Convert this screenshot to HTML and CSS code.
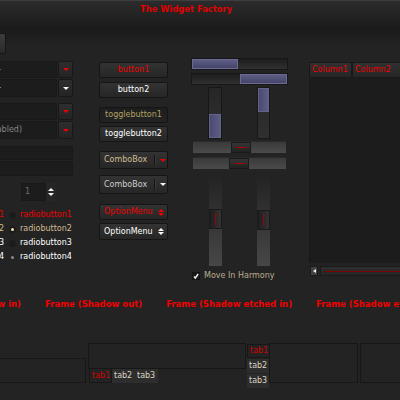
FILE: index.html
```html
<!DOCTYPE html>
<html>
<head>
<meta charset="utf-8">
<title>The Widget Factory</title>
<link rel="stylesheet" href="styles.css">
</head>
<body>
<div class="window">
  <div class="titlebar"><span class="title">The Widget Factory</span></div>
  <div class="toolbar"><div class="tbtn"></div></div>

  <div class="main">
    <div class="col-left">
      <div class="combo-entry">
        <div class="field"><span class="etext tan">comboentry -</span></div>
        <div class="abtn"><span class="tri-down red-tri"></span></div>
      </div>
      <div class="combo-entry ce2">
        <div class="field"><span class="etext white">comboentry -</span></div>
        <div class="abtn"><span class="tri-down white-tri"></span></div>
      </div>
      <div class="combo-entry ce3">
        <div class="field"></div>
        <div class="abtn"><span class="tri-down red-tri"></span></div>
      </div>
      <div class="combo-entry ce2">
        <div class="field"><span class="etext gray dis">entry (disabled)</span></div>
        <div class="abtn"><span class="tri-down red-tri"></span></div>
      </div>
      <div class="entry e5"></div>
      <div class="entry e6"></div>
      <div class="spin">
        <div class="spin-field">1</div>
        <div class="spin-arrows"><span class="tri-up white-tri small"></span><span class="tri-down white-tri small"></span></div>
      </div>
      <div class="radios">
        <div class="rrow"><span class="ck red">checkbutton1</span><span class="radio"></span><span class="rlabel red">radiobutton1</span></div>
        <div class="rrow"><span class="ck tan">checkbutton2</span><span class="radio on"><span class="dot"></span></span><span class="rlabel tan">radiobutton2</span></div>
        <div class="rrow"><span class="ck white">checkbutton3</span><span class="radio"></span><span class="rlabel white">radiobutton3</span></div>
        <div class="rrow"><span class="ck white">checkbutton4</span><span class="radio incon"><span class="dot"></span></span><span class="rlabel white">radiobutton4</span></div>
      </div>
    </div>

    <div class="col-mid">
      <div class="btn b1 red">button1</div>
      <div class="btn b2 white">button2</div>
      <div class="btn b3 toggled olive">togglebutton1</div>
      <div class="btn b4 white">togglebutton2</div>
      <div class="btn combo c1"><span class="tan">ComboBox</span><span class="sep"></span><span class="tri-down red-tri"></span></div>
      <div class="btn combo c2"><span class="lgray">ComboBox</span><span class="sep"></span><span class="tri-down white-tri"></span></div>
      <div class="btn opt o1"><span class="red">OptionMenu</span><span class="dbl"><span class="tri-up red-tri small"></span><span class="tri-down red-tri small"></span></span></div>
      <div class="btn opt o2"><span class="white">OptionMenu</span><span class="dbl"><span class="tri-up white-tri small"></span><span class="tri-down white-tri small"></span></span></div>
    </div>

    <div class="col-scales">
      <div class="pbar"><div class="pfill" style="width:48%"></div></div>
      <div class="pbar pb2"><div class="pfill" style="width:50%"></div></div>
      <div class="vbars">
        <div class="vbar va"><div class="vfill" style="height:48%"></div></div>
        <div class="vbar vb end"><div class="vfill" style="height:48%"></div></div>
      </div>
      <div class="hscale"><div class="hthumb" style="margin-left:38px"><span class="hline"></span></div></div>
      <div class="hscale hs2"><div class="hthumb" style="margin-left:36px"><span class="hline"></span></div></div>
      <div class="vscales">
        <div class="vscale sa"><div class="vthumb" style="margin-top:36px"><span class="vline"></span></div></div>
        <div class="vscale sb"><div class="vthumb" style="margin-top:37px"><span class="vline"></span></div></div>
      </div>
      <div class="check">
        <svg class="cbox" width="8" height="8" viewBox="0 0 8 8"><rect x="0.5" y="0.5" width="7" height="7" fill="#1a1a1a" stroke="#141414"/><path d="M2 4.5 L3.3 6 L6.2 2" stroke="#f0f0f0" stroke-width="1.4" fill="none"/></svg>
        <span class="tan2">Move In Harmony</span>
      </div>
    </div>

    <div class="col-tree">
      <div class="theader">
        <div class="th th1 red">Column1</div>
        <div class="th th2 red">Column2</div>
      </div>
      <div class="tbody"></div>
      <div class="hscroll">
        <div class="sbtn"><span class="tri-left"></span></div>
        <div class="strough"><span class="sline"></span></div>
      </div>
    </div>
  </div>

  <div class="frames">
    <div class="flabel f1">Frame (Shadow in)</div>
    <div class="flabel">Frame (Shadow out)</div>
    <div class="flabel">Frame (Shadow etched in)</div>
    <div class="flabel">Frame (Shadow etched out)</div>
  </div>

  <div class="notebooks">
    <div class="nb1"></div>
    <div class="nb2">
      <div class="pane"></div>
      <div class="tabs-bottom">
        <div class="tab active red2">tab1</div>
        <div class="tab ltan">tab2</div>
        <div class="tab ltan">tab3</div>
      </div>
    </div>
    <div class="nb3">
      <div class="tabs-left">
        <div class="tab active red2">tab1</div>
        <div class="tab ltan">tab2</div>
        <div class="tab ltan">tab3</div>
      </div>
      <div class="pane"></div>
    </div>
    <div class="nb4"></div>
  </div>
</div>
</body>
</html>
```

FILE: styles.css
```css
html, body {
  margin: 0;
  padding: 0;
}
body {
  background: #232323;
  font-family: "DejaVu Sans", "Noto Sans", sans-serif;
  font-size: 8px;
  line-height: 10px;
}
.window {
  width: 400px;
  height: 400px;
  overflow: hidden;
  background: #232323;
}

/* colours */
.red { color: #ee0000; }
.red2 { color: #d00000; }
.tan { color: #d0bc92; }
.tan2 { color: #bcad8e; }
.ltan { color: #dcd4c4; }
.white { color: #ffffff; }
.gray { color: #848484; }
.lgray { color: #cccccc; }
.olive { color: #b0a262; }

/* title / toolbar */
.titlebar {
  height: 30px;
  box-sizing: border-box;
  border-top: 1px solid #3e3e3e;
  background: linear-gradient(#2b2b2b, #1a1a1a);
  padding: 3px 0 0 140px;
}
.title {
  color: #e00000;
  font-weight: bold;
  font-size: 8.4px;
}
.toolbar {
  height: 26px;
  background: linear-gradient(#1b1b1b, #232323 60%);
  display: flex;
  align-items: center;
}
.tbtn {
  width: 24px;
  height: 19px;
  margin-left: -20px;
  border: 1px solid #151515;
  border-radius: 2px;
  background: linear-gradient(#3c3c3c, #2a2a2a);
}

/* triangles */
.tri-down, .tri-up {
  display: inline-block;
  width: 0;
  height: 0;
  border-left: 3.5px solid transparent;
  border-right: 3.5px solid transparent;
}
.tri-down { border-top: 3.5px solid currentColor; }
.tri-up { border-bottom: 3.5px solid currentColor; }
.tri-down.small, .tri-up.small {
  border-left-width: 3px;
  border-right-width: 3px;
}
.tri-down.small { border-top-width: 3px; }
.tri-up.small { border-bottom-width: 3px; }
.red-tri { color: #f00000; }
.white-tri { color: #f6f6f6; }

/* main */
.main {
  display: flex;
  align-items: flex-start;
  height: 224px;
}

/* left column */
.col-left {
  margin-left: -80px;
  width: 153px;
  flex: none;
  display: flex;
  flex-direction: column;
}
.combo-entry {
  display: flex;
  gap: 1px;
  height: 17px;
  margin-top: 5px;
}
.combo-entry.ce2 { margin-top: 1px; height: 18px; }
.combo-entry.ce3 { margin-top: 6px; }
.field, .entry {
  box-sizing: border-box;
  background: #1c1c1c;
  border: 1px solid #191919;
  border-radius: 1px;
}
.field {
  flex: 1;
  display: flex;
  align-items: center;
  justify-content: flex-end;
  padding-right: 55px;
}
.etext { white-space: nowrap; }
.etext.dis { margin-right: -21px; }
.abtn {
  width: 15px;
  box-sizing: border-box;
  border: 1px solid #181818;
  border-radius: 2px;
  background: linear-gradient(#2e2e2e, #242424);
  display: flex;
  align-items: center;
  justify-content: center;
}
.entry { height: 14px; }
.entry.e5 { margin-top: 7px; }
.entry.e6 { margin-top: 1px; height: 15px; }
.spin {
  margin-top: 7px;
  margin-left: 101px;
  width: 35px;
  height: 18px;
  display: flex;
}
.spin-field {
  width: 25px;
  box-sizing: border-box;
  background: #1c1c1c;
  border: 1px solid #191919;
  color: #6e6e6e;
  padding-left: 3px;
  display: flex;
  align-items: center;
}
.spin-arrows {
  flex: 1;
  background: #262626;
  display: flex;
  flex-direction: column;
  align-items: center;
  justify-content: center;
  gap: 2px;
}
.radios {
  margin-top: 7px;
  display: flex;
  flex-direction: column;
}
.rrow {
  height: 14px;
  display: flex;
  align-items: center;
}
.ck {
  width: 84px;
  text-align: right;
  white-space: nowrap;
  overflow: hidden;
  flex: none;
}
.radio {
  width: 7px;
  height: 7px;
  margin-left: 5px;
  border-radius: 50%;
  background: #1b1b1b;
  display: flex;
  align-items: center;
  justify-content: center;
  flex: none;
}
.radio .dot {
  width: 3px;
  height: 3px;
  border-radius: 50%;
  background: #efe0b0;
}
.radio.incon { background: transparent; }
.radio.incon .dot { background: #8a8a8a; }
.rlabel { margin-left: 4px; white-space: nowrap; }

/* middle column */
.col-mid {
  margin-left: 26px;
  width: 69px;
  flex: none;
  display: flex;
  flex-direction: column;
}
.btn {
  height: 16px;
  box-sizing: border-box;
  border: 1px solid #151515;
  border-radius: 2px;
  background: linear-gradient(#333333, #262626);
  display: flex;
  align-items: center;
  justify-content: center;
  white-space: nowrap;
}
.btn.b1 { margin-top: 6px; }
.btn.b2 { margin-top: 4px; }
.btn.b3 { margin-top: 9px; }
.btn.b4 { margin-top: 3px; }
.btn.toggled { background: linear-gradient(#1e1e1e, #232323); }
.btn.combo {
  justify-content: flex-start;
  padding-left: 4px;
}
.btn.c1 { margin-top: 9px; height: 18px; }
.btn.c2 { margin-top: 6px; height: 19px; }
.sep {
  width: 1px;
  height: 11px;
  background: #121212;
  border-right: 1px solid #3a3a3a;
  margin-left: 7px;
  margin-right: 4px;
}
.btn.opt {
  justify-content: space-between;
  padding: 0 3px 0 4px;
}
.btn.o1 { margin-top: 10px; }
.btn.o2 { margin-top: 3px; height: 17px; }
.dbl {
  display: flex;
  flex-direction: column;
  align-items: center;
  gap: 1px;
}

/* scales column */
.col-scales {
  margin-left: 23px;
  width: 97px;
  flex: none;
  display: flex;
  flex-direction: column;
}
.pbar {
  margin-top: 2px;
  height: 12px;
  box-sizing: border-box;
  border: 1px solid #171717;
  background: linear-gradient(#1d1d1d, #303030);
  display: flex;
}
.pbar.pb2 { margin-top: 3px; justify-content: flex-end; }
.pfill {
  background: linear-gradient(#5c5c86, #45456a);
  border: 1px solid #6a6a92;
  box-sizing: border-box;
}
.vbars {
  margin-top: 2px;
  height: 52px;
  display: flex;
}
.vbar {
  box-sizing: border-box;
  border: 1px solid #171717;
  background: linear-gradient(#262626, #303030);
  display: flex;
  flex-direction: column;
  justify-content: flex-end;
}
.vbar.va { margin-left: 17px; width: 14px; }
.vbar.vb { margin-left: 35px; width: 13px; justify-content: flex-start; }
.vfill {
  background: linear-gradient(90deg, #4a4a70, #5c5c86);
  border: 1px solid #62628c;
  box-sizing: border-box;
}
.hscale {
  margin-top: 2px;
  margin-left: 2px;
  width: 93px;
  height: 12px;
  background: linear-gradient(#3a3a3a, #4a4a4a);
  border-top: 1px solid #2a2a2a;
  box-sizing: border-box;
  display: flex;
}
.hscale.hs2 { margin-top: 4px; }
.hthumb {
  width: 20px;
  background: linear-gradient(#363636, #222222);
  border: 1px solid #1a1a1a;
  box-sizing: border-box;
  display: flex;
  align-items: center;
  justify-content: center;
}
.hline { width: 11px; height: 1px; background: #a00000; }
.vscales {
  margin-top: 4px;
  height: 93px;
  display: flex;
}
.vscale {
  width: 13px;
  background: linear-gradient(#222222, #474747);
  box-sizing: border-box;
  display: flex;
  flex-direction: column;
}
.vscale.sa { margin-left: 18px; }
.vscale.sb { margin-left: 35px; }
.vthumb {
  height: 20px;
  background: linear-gradient(90deg, #1e1e1e, #333333);
  border: 1px solid #1a1a1a;
  box-sizing: border-box;
  display: flex;
  align-items: center;
  justify-content: center;
}
.vline { width: 1px; height: 12px; background: #a00000; }
.check {
  margin-top: 5px;
  margin-left: 1px;
  height: 10px;
  display: flex;
  align-items: center;
  gap: 4px;
  white-space: nowrap;
}
.cbox { display: block; }

/* tree */
.col-tree {
  margin-left: 21px;
  margin-top: 6px;
  width: 120px;
  flex: none;
  display: flex;
  flex-direction: column;
}
.theader {
  height: 16px;
  display: flex;
}
.th {
  box-sizing: border-box;
  border: 1px solid #181818;
  background: linear-gradient(#303030, #262626);
  padding-left: 2px;
  display: flex;
  align-items: center;
  white-space: nowrap;
}
.th1 { width: 43px; }
.th2 { flex: 1; }
.tbody {
  height: 185px;
  background: #1c1c1c;
  border-left: 1px solid #1a1a1a;
}
.hscroll {
  margin-top: 3px;
  height: 10px;
  display: flex;
  gap: 2px;
}
.sbtn {
  margin-left: 1px;
  width: 8px;
  background: #424242;
  border: 1px solid #1a1a1a;
  box-sizing: border-box;
  display: flex;
  align-items: center;
  justify-content: center;
}
.tri-left {
  width: 0;
  height: 0;
  border-top: 2.5px solid transparent;
  border-bottom: 2.5px solid transparent;
  border-right: 3px solid #f4f4f4;
}
.strough {
  flex: 1;
  background: linear-gradient(#2e2e2e, #252525);
  border: 1px solid #1a1a1a;
  box-sizing: border-box;
  display: flex;
  align-items: center;
  padding-left: 3px;
}
.sline { flex: 1; height: 1px; background: #800000; }

/* frames */
.frames {
  margin-top: 19px;
  margin-left: -100px;
  display: flex;
  gap: 24px;
  white-space: nowrap;
}
.flabel {
  color: #f00000;
  font-weight: bold;
  font-size: 8.5px;
  flex: none;
}
.flabel.f1 { width: 121px; text-align: right; }

/* notebooks */
.notebooks {
  margin-top: 34px;
  display: flex;
  align-items: flex-start;
}
.nb1 {
  margin-left: -100px;
  margin-top: 15px;
  width: 186px;
  height: 25px;
  box-sizing: border-box;
  border: 1px solid #171717;
  flex: none;
}
.nb2 {
  margin-left: 2px;
  width: 158px;
  flex: none;
}
.pane {
  box-sizing: border-box;
  border: 1px solid #171717;
}
.nb2 .pane { height: 26px; }
.tabs-bottom {
  display: flex;
  padding-left: 1px;
}
.tab {
  height: 14px;
  box-sizing: border-box;
  padding-left: 2px;
  width: 23px;
  display: flex;
  align-items: center;
  background: #2d2d2d;
  white-space: nowrap;
}
.tab.active {
  background: #232323;
  border: 1px solid #171717;
  border-top: none;
}
.nb3 {
  margin-left: 1px;
  display: flex;
  flex: none;
}
.tabs-left {
  display: flex;
  flex-direction: column;
  gap: 1px;
  padding-top: 1px;
}
.tabs-left .tab { width: 22px; }
.tabs-left .tab.active { border: 1px solid #171717; border-right: none; }
.nb3 .pane { width: 89px; height: 40px; }
.nb4 {
  margin-left: 2px;
  width: 60px;
  height: 40px;
  box-sizing: border-box;
  border: 1px solid #171717;
  flex: none;
}
```
